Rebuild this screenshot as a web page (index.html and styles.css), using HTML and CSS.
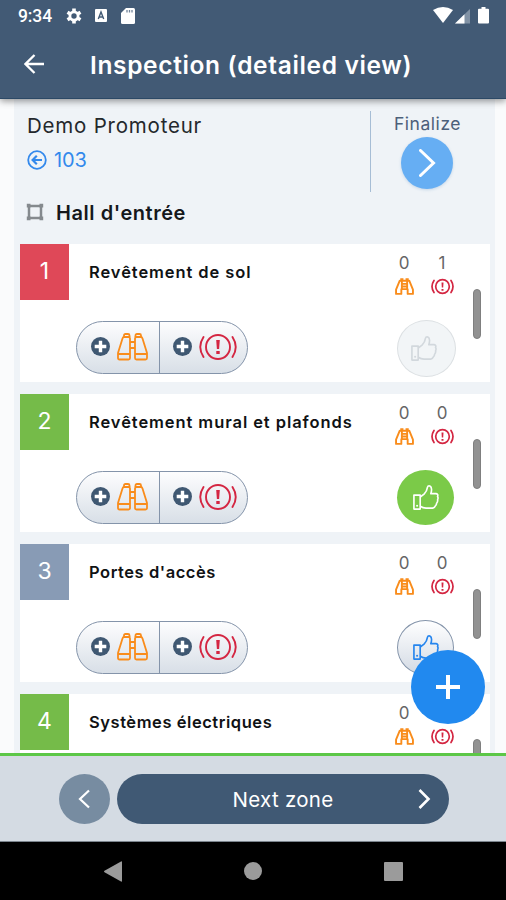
FILE: index.html
```html
<!DOCTYPE html>
<html lang="en">
<head>
<meta charset="utf-8">
<title>Inspection (detailed view)</title>
<link rel="stylesheet" href="styles.css">
</head>
<body>
<svg class="defs" width="0" height="0" aria-hidden="true">
  <defs>
    <symbol id="binoculars" viewBox="0 0 31 28">
      <g fill="none" stroke="currentColor" stroke-width="1.800" stroke-linejoin="round">
        <path d="M7 4V2.500Q7 1 8.500 1H11q1.500 0 1.500 1.500V4M18.500 4V2.500Q18.500 1 20 1h2.500Q24 1 24 2.500V4"/>
        <path d="M7 4h4.500Q13 4 13 5.500V25q0 1.500-1.500 1.500H2.500Q1 26.500 1 25v-5L5.500 5.500Q6 4 7 4ZM24 4h-4.500Q18 4 18 5.500V25q0 1.500 1.500 1.500h9Q30 26.500 30 25v-5L25.500 5.500Q25 4 24 4ZM1 21h12M18 21h12M13 9h5M13 15h5"/>
      </g>
    </symbol>
    <symbol id="binoculars-small" viewBox="0 0 18 16">
      <g fill="none" stroke="currentColor" stroke-width="1.800" stroke-linejoin="round">
        <path d="M4.500 2.500h9L17 11v4h-5v-4.500H6V15H1v-4L4.500 2.500ZM6.500 3v7.500M11.500 3v7.500M5 1.200h3M10 1.200h3M7 5.500h4M7 8h4"/>
      </g>
    </symbol>
    <symbol id="alert" viewBox="0 0 38 28">
      <g fill="none" stroke="currentColor" stroke-width="1.900" stroke-linecap="round">
        <circle cx="19" cy="14" r="12"/>
        <path d="M4.500 4q-6.500 10 0 20M33.500 4q6.500 10 0 20"/>
      </g>
      <path fill="currentColor" d="M17.200 7h3.600l-.7 9h-2.200ZM17.300 18h3.400v3h-3.400z"/>
    </symbol>
    <symbol id="alert-small" viewBox="0 0 23 17">
      <g fill="none" stroke="currentColor" stroke-width="1.700" stroke-linecap="round">
        <circle cx="11.500" cy="8.500" r="6.800"/>
        <path d="M3 2.500q-4 6 0 12M20 2.500q4 6 0 12"/>
      </g>
      <path fill="currentColor" d="M10.500 4.500h2l-.3 5h-1.400ZM10.500 11h2v1.800h-2z"/>
    </symbol>
    <symbol id="plus" viewBox="0 0 19 19">
      <circle cx="9.500" cy="9.500" r="9.500" fill="#3f5872"/>
      <path d="M9.500 3.700v11.600M3.700 9.500h11.600" stroke="#fff" stroke-width="3.400"/>
    </symbol>
    <symbol id="thumb" viewBox="0 0 28 28">
      <g fill="none" stroke="currentColor" stroke-width="1.700" stroke-linejoin="round">
        <path d="M2 11.500h6.500V26H2z"/>
        <path d="M8.500 13.500l4-3q3-3 3.500-7Q16.500 1.500 18.500 2q3 1.500 1 8H25q2.500.5 1.500 3 1 1.500 0 3.500.5 2-1 3.500 0 2-1.500 3-.5 1.500-2.500 2H14.500q-3-.2-6-2"/>
      </g>
      <circle cx="5.300" cy="22.500" r="1.100" fill="currentColor"/>
    </symbol>
  </defs>
</svg>

<div class="screen">
  <header class="top">
    <div class="status">
      <span class="time">9:34</span>
      <svg class="gear" width="16" height="16" viewBox="0 0 16 16"><g stroke="#fff" stroke-width="3.600"><path d="M8 .5v15M1.500 4.250l13 7.500M1.500 11.750l13-7.500"/></g><circle cx="8" cy="8" r="5.500" fill="#fff"/><circle cx="8" cy="8" r="2.700" fill="#425a75"/></svg>
      <svg class="box" width="12" height="13" viewBox="0 0 12 13"><rect width="12" height="13" rx="1" fill="#fff"/><path d="M3.300 10L6 3l2.700 7M4.300 8h3.400" fill="none" stroke="#425a75" stroke-width="1.400"/></svg>
      <svg class="card-icon" width="14" height="16" viewBox="0 0 14 16"><path d="M5 0h7.500Q14 0 14 1.500v13q0 1.500-1.500 1.500h-11Q0 16 0 14.500V5Z" fill="#fff"/><path d="M6 2v2.500M8.500 2v2.500M11 2v2.500" stroke="#71849a" stroke-width="1.300"/></svg>
      <svg class="signals" width="57" height="17" viewBox="0 0 57 17"><path d="M0 3Q10 -3 20 3L10 16Z" fill="#fff"/><path d="M22 16.500L37 2v14.500Z" fill="#8192a5"/><path d="M22 16.500L31.500 7.300v9.200Z" fill="#fff"/><path d="M48.500 1.700V0h4v1.700H55q1 0 1 1v12.800q0 1-1 1h-9q-1 0-1-1V2.700q0-1 1-1Z" fill="#fff"/></svg>
    </div>
    <div class="titlebar">
      <svg width="21" height="20" viewBox="0 0 21 20"><path d="M20 10H1.500M10.500 1L1.500 10l9 9" fill="none" stroke="#fff" stroke-width="2.300"/></svg>
      <h1>Inspection (detailed view)</h1>
    </div>
  </header>

  <main class="content">
    <div class="panel">
      <section class="summary">
        <div class="project">
          <div class="project-name">Demo Promoteur</div>
          <div class="unit">
            <svg width="20" height="20" viewBox="0 0 20 20"><g fill="none" stroke="currentColor" stroke-width="1.800"><circle cx="10" cy="10" r="8.800"/><path d="M15 10H6M9.800 5.800L5.600 10l4.200 4.200" stroke-width="2.200"/></g></svg>
            <span>103</span>
          </div>
        </div>
        <div class="finalize">
          <span>Finalize</span>
          <div class="go"><svg width="17" height="28" viewBox="0 0 17 28"><path d="M1.500 1.500L14.500 14l-13 12.500" fill="none" stroke="#fff" stroke-width="3" stroke-linecap="round"/></svg></div>
        </div>
      </section>
      <h2 class="zone">
        <svg width="18" height="18" viewBox="0 0 18 18"><path d="M3 3h12v12H3z" fill="none" stroke="#858a8e" stroke-width="2.500"/><path d="M.8.8h3.700v3.700H.8zM13.500.8h3.700v3.700h-3.700zM.8 13.500h3.700v3.700H.8zM13.500 13.500h3.700v3.700h-3.700z" fill="#858a8e"/></svg>
        <span>Hall d'entrée</span>
      </h2>

      <article class="card">
        <div class="body">
          <div class="head">
            <div class="number red">1</div>
            <h3 class="wide">Revêtement de sol</h3>
            <div class="counts">
              <div class="count">0<svg class="orange" width="19" height="17"><use href="#binoculars-small"/></svg></div>
              <div class="count">1<svg class="crimson" width="23" height="17"><use href="#alert-small"/></svg></div>
            </div>
          </div>
          <div class="actions">
            <div class="pill">
              <div class="half first"><svg width="19" height="19"><use href="#plus"/></svg><svg class="orange" width="31" height="28"><use href="#binoculars"/></svg></div>
              <div class="half"><svg width="19" height="19"><use href="#plus"/></svg><svg class="crimson" width="38" height="28"><use href="#alert"/></svg></div>
            </div>
            <div class="thumb disabled"><svg width="27" height="27"><use href="#thumb"/></svg></div>
          </div>
        </div>
        <div class="bar"></div>
      </article>

      <article class="card">
        <div class="body">
          <div class="head">
            <div class="number green">2</div>
            <h3 class="wide">Revêtement mural et plafonds</h3>
            <div class="counts">
              <div class="count">0<svg class="orange" width="19" height="17"><use href="#binoculars-small"/></svg></div>
              <div class="count">0<svg class="crimson" width="23" height="17"><use href="#alert-small"/></svg></div>
            </div>
          </div>
          <div class="actions">
            <div class="pill">
              <div class="half first"><svg width="19" height="19"><use href="#plus"/></svg><svg class="orange" width="31" height="28"><use href="#binoculars"/></svg></div>
              <div class="half"><svg width="19" height="19"><use href="#plus"/></svg><svg class="crimson" width="38" height="28"><use href="#alert"/></svg></div>
            </div>
            <div class="thumb chosen"><svg width="27" height="27"><use href="#thumb"/></svg></div>
          </div>
        </div>
        <div class="bar"></div>
      </article>

      <article class="card">
        <div class="body">
          <div class="head">
            <div class="number slate">3</div>
            <h3>Portes d'accès</h3>
            <div class="counts">
              <div class="count">0<svg class="orange" width="19" height="17"><use href="#binoculars-small"/></svg></div>
              <div class="count">0<svg class="crimson" width="23" height="17"><use href="#alert-small"/></svg></div>
            </div>
          </div>
          <div class="actions">
            <div class="pill">
              <div class="half first"><svg width="19" height="19"><use href="#plus"/></svg><svg class="orange" width="31" height="28"><use href="#binoculars"/></svg></div>
              <div class="half"><svg width="19" height="19"><use href="#plus"/></svg><svg class="crimson" width="38" height="28"><use href="#alert"/></svg></div>
            </div>
            <div class="thumb"><svg width="27" height="27"><use href="#thumb"/></svg></div>
          </div>
        </div>
        <div class="bar"></div>
      </article>

      <article class="card">
        <div class="body">
          <div class="head">
            <div class="number green">4</div>
            <h3>Systèmes électriques</h3>
            <div class="counts">
              <div class="count">0<svg class="orange" width="19" height="17"><use href="#binoculars-small"/></svg></div>
              <div class="count"><span class="covered"></span><svg class="crimson" width="23" height="17"><use href="#alert-small"/></svg></div>
            </div>
          </div>
        </div>
        <div class="bar"></div>
      </article>
    </div>
  </main>

  <div class="fab"><svg width="26" height="26" viewBox="0 0 26 26"><path d="M13 1v24M1 13h24" stroke="#fff" stroke-width="4"/></svg></div>

  <footer class="zonebar">
    <div class="prev"><svg width="13" height="20" viewBox="0 0 13 20"><path d="M11 1.500L2 10l9 8.500" fill="none" stroke="#fff" stroke-width="2.200"/></svg></div>
    <div class="next"><span>Next zone</span><svg width="13" height="20" viewBox="0 0 13 20"><path d="M1.500 1L10.500 10l-9 9" fill="none" stroke="#fff" stroke-width="2.600"/></svg></div>
  </footer>
  <nav class="system">
    <svg width="18" height="21" viewBox="0 0 18 21"><path d="M18 1v19q0 1-1 .5L.5 11.200q-1-.7 0-1.400L17 .5q1-.5 1 .5Z" fill="#9b9b9b"/></svg>
    <svg width="18" height="18" viewBox="0 0 18 18"><circle cx="9" cy="9" r="9" fill="#9b9b9b"/></svg>
    <svg width="19" height="19" viewBox="0 0 19 19"><rect width="19" height="19" rx="1" fill="#9b9b9b"/></svg>
  </nav>
</div>
</body>
</html>
```
FILE: styles.css
```css
* { box-sizing: border-box; }
body { margin: 0; font-family: Inter, "Open Sans", sans-serif; }
h1, h2, h3 { margin: 0; }
svg { display: block; flex: none; }
.defs { position: absolute; }
.screen { position: relative; width: 506px; height: 900px; display: flex; flex-direction: column; overflow: hidden; }

.top { flex: none; height: 99px; background: #425a75; border-bottom: 1px solid #2c4966; box-shadow: 0 2px 7px rgba(0, 0, 0, .42); z-index: 1; }
.status { height: 31px; display: flex; align-items: center; padding: 0 16px 0 18px; color: #fff; }
.time { font: 500 17.500px Roboto, sans-serif; width: 48px; letter-spacing: -.1px; }
.box { margin-left: 13px; }
.card-icon { margin-left: 14px; }
.signals { margin-left: auto; }
.titlebar { height: 66px; display: flex; align-items: center; padding-left: 24px; gap: 45px; color: #fff; }
.titlebar h1 { font-size: 24.500px; font-weight: 600; letter-spacing: .65px; white-space: nowrap; padding-top: 2px; }

.content { flex: 1; min-height: 0; overflow: hidden; background: #fafbfc; padding: 0 11px 0 14px; }
.panel { background: #eff3f7; padding: 12px 5px 0 6px; }
.summary { display: flex; height: 81px; justify-content: space-between; }
.project { padding-left: 7px; }
.project-name { font-size: 20.500px; line-height: 30px; color: #24282c; letter-spacing: .79px; }
.unit { display: flex; align-items: center; gap: 7px; color: #3389ec; font-size: 20px; line-height: 28px; margin-top: 5px; letter-spacing: -.1px; }
.finalize { width: 120px; border-left: 1px solid #a6bdd5; display: flex; flex-direction: column; align-items: center; padding-right: 7px; color: #4c607a; font-size: 17.500px; line-height: 26px; letter-spacing: .55px; }
.finalize span { padding-left: 1px; }
.go { width: 52px; height: 52px; border-radius: 50%; background: #66aef3; display: grid; place-items: center; box-shadow: 0 1px 3px rgba(100, 150, 200, .3); }
.zone { display: flex; align-items: center; gap: 12px; height: 40px; margin-bottom: 12px; padding-left: 6px; font-size: 20px; font-weight: 600; letter-spacing: .55px; color: #15181b; }
.zone span { padding-top: 1px; }

.card { display: flex; background: #fff; height: 138px; margin-bottom: 12px; }
.body { width: 453px; }
.head { display: flex; height: 56px; }
.number { width: 49px; height: 56px; color: #fff; font-size: 23px; display: grid; place-items: center; padding-bottom: 2px; }
.red { background: #df4858; }
.green { background: #75bb49; }
.slate { background: #889bb5; }
.head h3 { flex: 1; padding-left: 20px; font-size: 16.500px; font-weight: 600; line-height: 56px; letter-spacing: .55px; color: #101214; white-space: nowrap; }
.head .wide { letter-spacing: .92px; }
.counts { display: flex; margin-right: 12px; padding-top: 9px; }
.count { width: 38px; display: flex; flex-direction: column; align-items: center; font-size: 17px; line-height: 21px; color: #666; gap: 4px; }
.covered { height: 21px; }
.orange { color: #f98c1b; }
.crimson { color: #d42642; }
.actions { display: flex; justify-content: space-between; padding: 21px 17px 0 56px; }
.pill { display: flex; width: 172px; height: 53px; border: 1.500px solid #8494aa; border-radius: 27px; background: linear-gradient(#fdfdfe, #d8dfe7); }
.half { display: flex; align-items: center; gap: 7px; padding: 0 0 2px 13px; flex: 1; }
.half.first { flex: none; width: 83px; padding-left: 14px; border-right: 1px solid #8494aa; }
.thumb { width: 57px; height: 55px; margin: -1px 2px 0 0; border-radius: 50%; border: 1px solid #8494aa; background: linear-gradient(#fff, #d3dae4); color: #2585ee; display: grid; place-items: center; }
.disabled { height: 57px; width: 59px; margin-right: 0; color: #d2d8dd; border-color: #dce0e3; background: #f2f5f7; padding-right: 6px; }
.chosen { color: #fff; border: 0; background: #7bca48; }
.bar { width: 8px; height: 50px; border-radius: 4px; background: #929292; border: 1px solid #7f7f7f; margin-top: 45px; }

.fab { position: absolute; left: 411px; top: 650px; width: 74px; height: 74px; border-radius: 50%; background: #2189ef; display: grid; place-items: center; z-index: 2; }
.zonebar { flex: none; height: 89px; border-top: 3px solid #5cc747; background: #d4dbe3; border-bottom: 1px solid #7c858e; display: flex; align-items: center; gap: 7px; padding-left: 59px; }
.prev { width: 51px; height: 50px; border-radius: 50%; background: #778ca1; display: grid; place-items: center; }
.next { width: 332px; height: 50px; border-radius: 25px; background: #405974; color: #fff; display: flex; align-items: center; font-size: 20.500px; letter-spacing: .3px; padding-right: 18px; }
.next span { flex: 1; padding: 2px 0 0 31px; text-align: center; }
.system { flex: none; height: 58px; background: #000; display: grid; grid-template-columns: 140px 140px 140px; padding-left: 43px; justify-items: center; align-items: center; }
```
